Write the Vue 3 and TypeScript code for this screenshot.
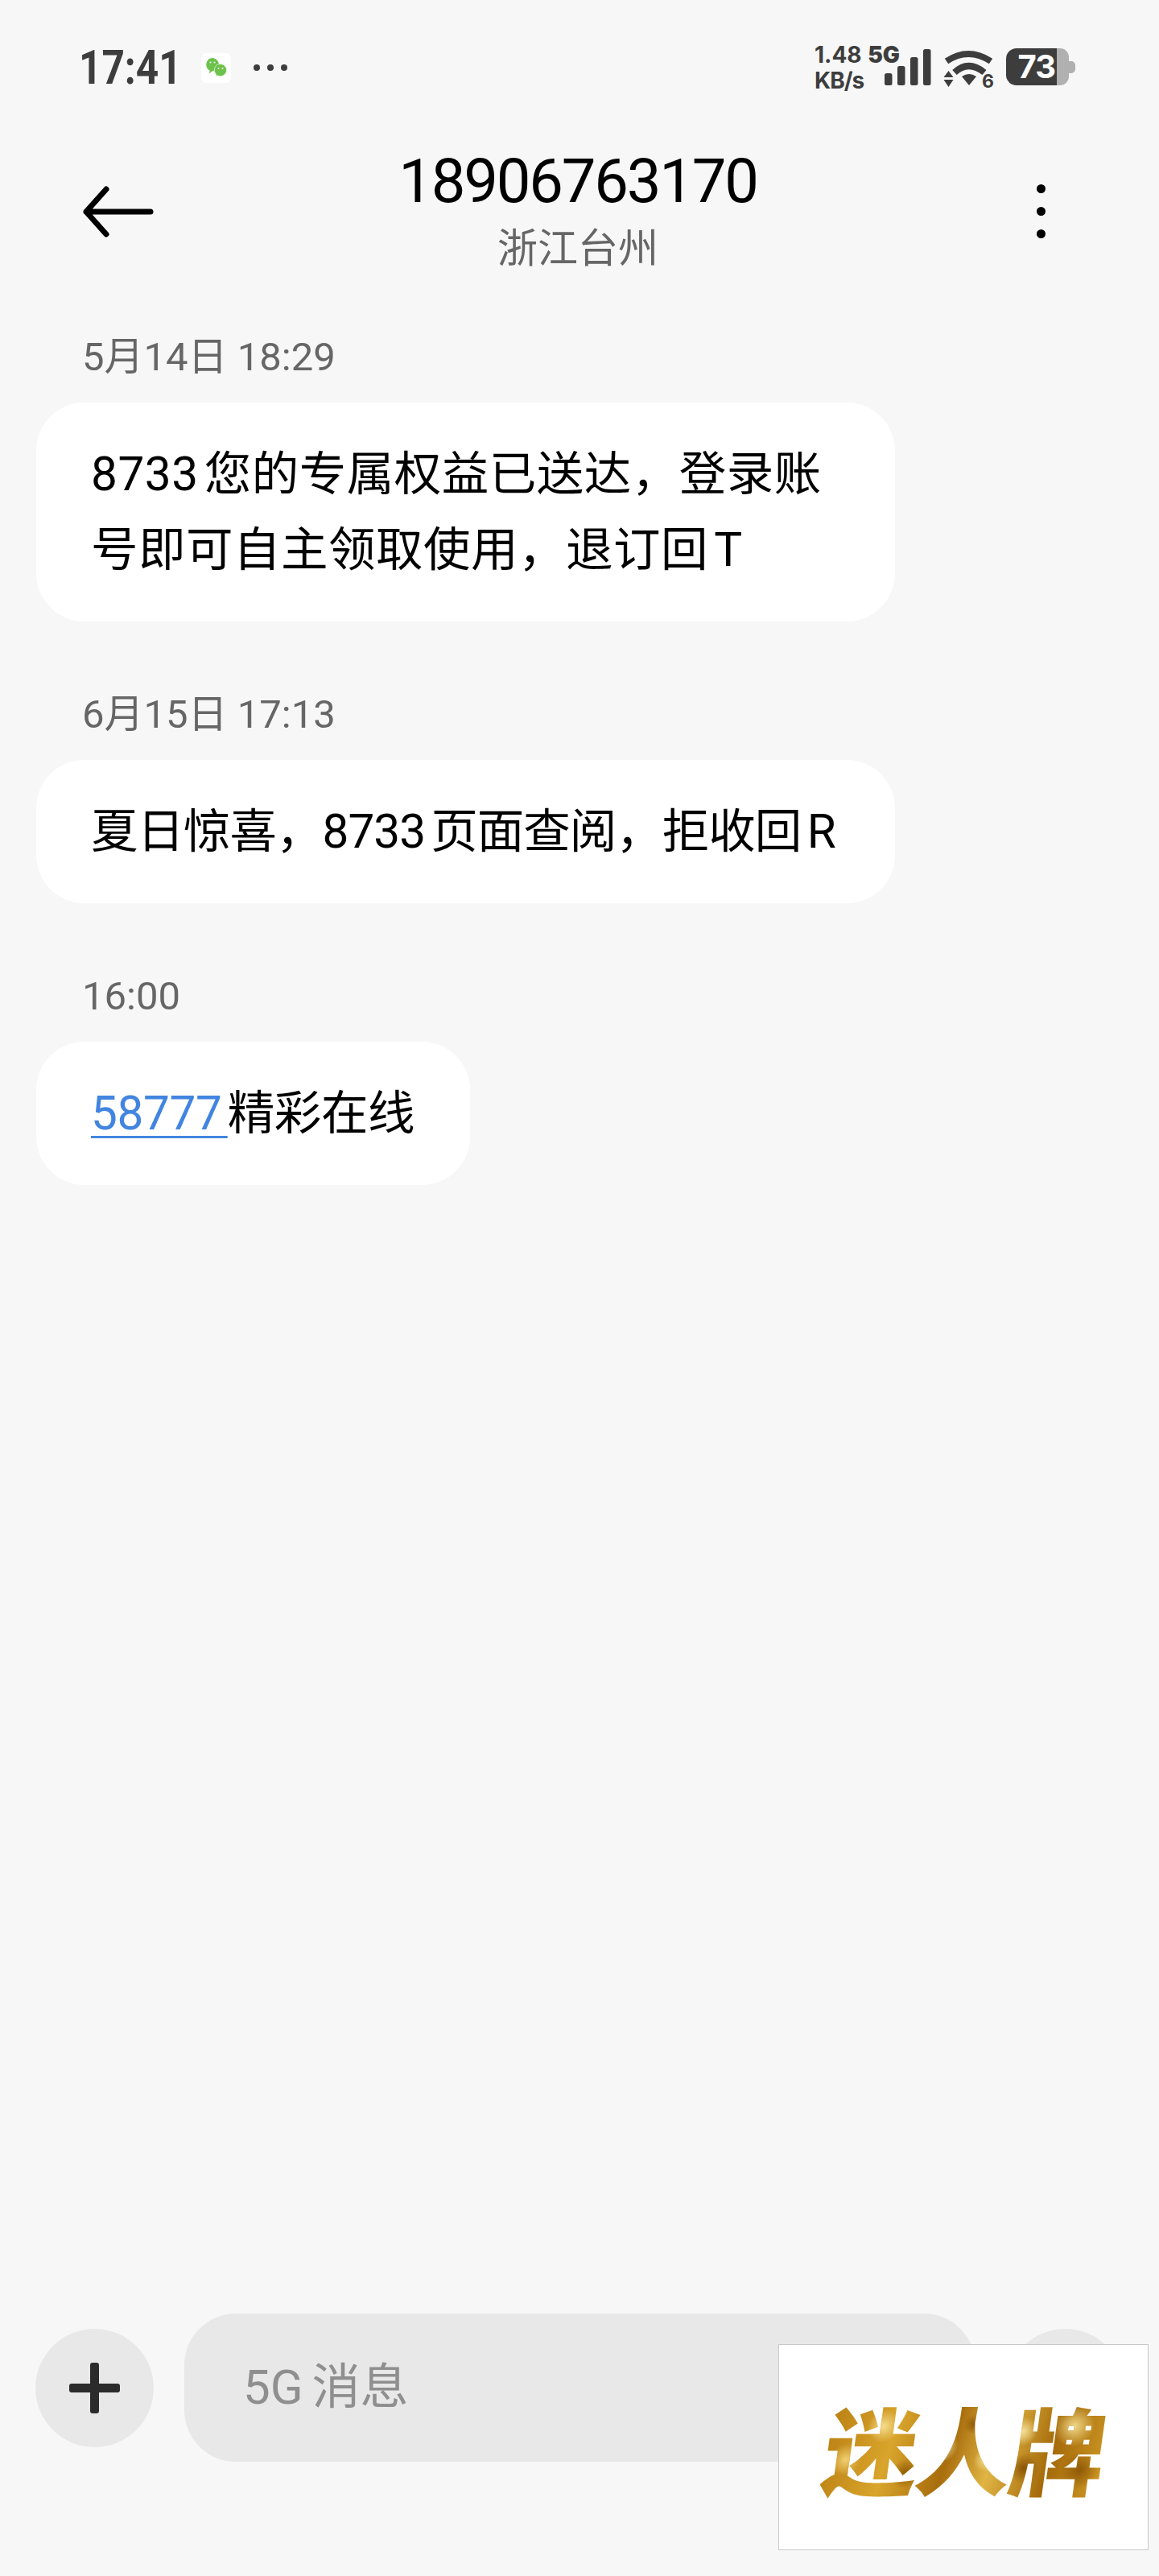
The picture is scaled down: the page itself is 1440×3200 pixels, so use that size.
<script setup lang="ts">
interface Message {
  time: string
  text: string
  link?: string
  wide?: boolean
  spacing: number
}

const messages: Message[] = [
  { time: '5月14日 18:29', text: '8733您的专属权益已送达，登录账号即可自主领取使用，退订回T', wide: true, spacing: 0.5 },
  { time: '6月15日 17:13', text: '夏日惊喜，8733页面查阅，拒收回R', wide: true, spacing: -1 },
  { time: '16:00', link: '58777', text: '精彩在线', spacing: -0.4 },
]

// signal bars, shortest first
const bars = [
  { x: 0, y: 30, h: 15 },
  { x: 16, y: 21, h: 24 },
  { x: 32, y: 10, h: 35 },
  { x: 48, y: 0, h: 45 },
]
</script>

<template>
  <div class="page">
    <div class="status-bar">
      <div class="status-left">
        <span class="clock">17:41</span>
        <span class="wechat-tile">
          <svg width="28" height="26" viewBox="0 0 28 26">
            <path d="M9 1a8.2 8.2 0 0 1 8 8.200a8.200 8.200 0 0 1-8 8l-4 3 .6-3.800A8.200 8.200 0 0 1 9 1z" fill="#6cc24a" />
            <path d="M19 8.500a7.600 7.600 0 1 1-3.800 14.200l-.2 2.300-1.800-3.800A7.600 7.600 0 0 1 19 8.500z" fill="#6cc24a" stroke="#fff" stroke-width=".6" />
            <circle cx="6.500" cy="6.500" r="1.100" fill="#fff" />
            <circle cx="11.500" cy="6.500" r="1.100" fill="#fff" />
            <circle cx="16.500" cy="14" r="1" fill="#fff" />
            <circle cx="21.500" cy="14" r="1" fill="#fff" />
          </svg>
        </span>
        <span class="more-dots"><i></i><i></i><i></i></span>
      </div>
      <div class="status-right">
        <div class="speed">
          <span>1.48 <b>5G</b></span>
          <span class="unit">KB/s</span>
        </div>
        <svg class="signal" width="58" height="46" viewBox="0 0 58 46">
          <rect v-for="b in bars" :key="b.x" :x="b.x" :y="b.y" width="9.500" :height="b.h" rx="2.500" fill="#3d3d3d" />
        </svg>
        <svg class="wifi" width="64" height="56" viewBox="0 0 64 56">
          <path d="M4 14Q31 -4 59 14" fill="none" stroke="#3d3d3d" stroke-width="8" />
          <path d="M14 28Q31 12 51 28" fill="none" stroke="#3d3d3d" stroke-width="8" />
          <path d="M23 33Q32 27 41 33L32 44z" fill="#3d3d3d" />
          <path d="M6.500 26l6 8H.5zM6.500 46l-6-9h12z" fill="#3d3d3d" />
          <text x="48" y="47" class="wifi-six">6</text>
        </svg>
        <div class="battery">
          <span class="battery-fill">73</span>
          <span class="battery-rest"></span>
          <span class="battery-nub"></span>
        </div>
      </div>
    </div>

    <header class="header">
      <svg class="back" width="90" height="64" viewBox="0 0 90 64">
        <path d="M31 4L6 32l25 28M6 32h80" fill="none" stroke="#000" stroke-width="7" stroke-linecap="round" stroke-linejoin="round" />
      </svg>
      <div class="contact">
        <div class="number">18906763170</div>
        <div class="region">浙江台州</div>
      </div>
      <div class="menu"><i></i><i></i><i></i></div>
    </header>

    <main class="thread">
      <section v-for="m in messages" :key="m.time" class="msg">
        <div class="time">{{ m.time }}</div>
        <div class="bubble" :class="{ wide: m.wide }" :style="{ letterSpacing: m.spacing + 'px' }">
          <span v-if="m.link" class="link">{{ m.link }}</span>{{ m.text }}
        </div>
      </section>
    </main>

    <footer class="composer">
      <div class="round-btn">
        <span class="plus"></span>
      </div>
      <div class="input">5G 消息</div>
      <div class="round-btn"></div>
    </footer>

    <div class="watermark">
      <span class="brand">迷人牌</span>
    </div>
  </div>
</template>

<style scoped>
.page {
  position: relative;
  width: 1440px;
  height: 3200px;
  display: flex;
  flex-direction: column;
  overflow: hidden;
  background: #f7f7f7;
  font-family: Roboto, "Noto Sans CJK SC", sans-serif;
}

.status-bar {
  height: 160px;
  flex: none;
  display: flex;
  justify-content: space-between;
  align-items: flex-start;
  padding: 0 104px 0 98px;
  box-sizing: border-box;
  color: #3d3d3d;
}
.status-left {
  display: flex;
  align-items: center;
  margin-top: 54px;
  height: 60px;
}
.clock {
  width: 152px;
  font-size: 59px;
  line-height: 60px;
  font-weight: 700;
  transform: scaleX(0.84);
  transform-origin: left center;
}
.wechat-tile {
  width: 37px;
  height: 37px;
  border-radius: 7px;
  background: #fff;
  display: flex;
  align-items: center;
  justify-content: center;
}
.more-dots {
  display: flex;
  gap: 9px;
  margin-left: 28px;
}
.more-dots i {
  width: 8px;
  height: 8px;
  border-radius: 50%;
  background: #3d3d3d;
}
.status-right {
  display: flex;
  align-items: flex-start;
  margin-top: 52px;
}
.speed {
  width: 87px;
  display: flex;
  flex-direction: column;
  font-family: Inter, sans-serif;
  font-size: 28px;
  line-height: 32px;
  font-weight: 700;
  white-space: nowrap;
}
.speed b {
  margin-left: 1px;
}
.unit {
  letter-spacing: -1px;
}
.signal {
  margin-top: 9px;
  margin-right: 15px;
}
.wifi {
  margin-top: 10px;
  margin-right: 14px;
}
.wifi-six {
  font-family: Inter, sans-serif;
  font-size: 23px;
  font-weight: 700;
  fill: #3d3d3d;
}
.battery {
  position: relative;
  display: flex;
  width: 86px;
  height: 46px;
  margin-top: 8px;
}
.battery-fill {
  width: 63px;
  height: 46px;
  box-sizing: border-box;
  padding-right: 2px;
  border-radius: 13px 0 0 13px;
  background: #3d3d3d;
  color: #fff;
  font-family: Inter, sans-serif;
  font-size: 40px;
  line-height: 46px;
  font-weight: 700;
  letter-spacing: -1px;
  text-align: right;
}
.battery-rest {
  width: 15px;
  height: 46px;
  border-radius: 0 11px 11px 0;
  background: #b0b0b0;
}
.battery-nub {
  width: 8px;
  height: 15px;
  margin-top: 16px;
  border-radius: 0 5px 5px 0;
  background: #b0b0b0;
}

.header {
  height: 187px;
  flex: none;
  display: grid;
  grid-template-columns: 1fr auto 1fr;
  align-items: start;
  padding: 0 141px 0 101px;
}
.back {
  margin-top: 71px;
}
.contact {
  text-align: center;
  margin: 20px 0 0 36px;
}
.number {
  font-size: 76px;
  line-height: 90px;
  color: #000;
  letter-spacing: -2.200px;
}
.region {
  font-size: 50px;
  line-height: 79px;
  color: #666;
}
.menu {
  justify-self: end;
  display: flex;
  flex-direction: column;
  gap: 17px;
  margin-top: 69px;
}
.menu i {
  width: 11px;
  height: 11px;
  border-radius: 50%;
  background: #000;
}

.thread {
  display: flex;
  flex-direction: column;
  align-items: flex-start;
  gap: 85px;
  padding: 66px 0 0 45px;
}
.msg {
  display: flex;
  flex-direction: column;
  align-items: flex-start;
}
.time {
  margin: 1px 0 26px 57px;
  font-size: 49px;
  line-height: 60px;
  color: #666;
}
.bubble {
  box-sizing: border-box;
  padding: 42px 69px 42px 68px;
  border-radius: 60px;
  background: #fff;
  color: #000;
  font-size: 58.500px;
  line-height: 94px;
  text-autospace: normal;
}
.bubble.wide {
  width: 1067px;
  padding-right: 50px;
}
.link {
  color: #4285e0;
  text-decoration: underline;
  text-decoration-thickness: 3px;
  text-underline-offset: 8px;
}

.composer {
  margin-top: auto;
  padding: 0 43px 142px 44px;
  display: flex;
  align-items: center;
  gap: 38px;
}
.round-btn {
  flex: none;
  width: 147px;
  height: 147px;
  border-radius: 50%;
  background: #e8e8e8;
  display: flex;
  align-items: center;
  justify-content: center;
}
.plus {
  position: relative;
  width: 63px;
  height: 63px;
}
.plus::before,
.plus::after {
  content: "";
  position: absolute;
  background: #2b2b2b;
  border-radius: 3px;
}
.plus::before {
  left: 0;
  right: 0;
  top: 26px;
  height: 11px;
}
.plus::after {
  top: 0;
  bottom: 0;
  left: 26px;
  width: 11px;
}
.input {
  flex: 1;
  height: 184px;
  box-sizing: border-box;
  padding-left: 73px;
  border-radius: 64px;
  background: #e8e8e8;
  color: #8f8f8f;
  font-size: 60px;
  line-height: 184px;
  word-spacing: -4px;
}

.watermark {
  position: absolute;
  left: 967px;
  top: 2912px;
  width: 460px;
  height: 256px;
  box-sizing: border-box;
  border: 1px solid #c8c8c8;
  background: #fff;
  display: flex;
  align-items: center;
  justify-content: center;
}
.brand {
  display: block;
  margin-left: 4px;
  font-family: "Noto Sans CJK SC", sans-serif;
  font-size: 118px;
  line-height: 130px;
  font-weight: 900;
  letter-spacing: -2px;
  transform: skewX(-8deg);
  color: transparent;
  background-image:
    radial-gradient(circle at 8% 62%, #f0cf72 0, transparent 6%),
    radial-gradient(circle at 20% 30%, #f4dc8e 0, transparent 7%),
    radial-gradient(circle at 30% 75%, #8f5a08 0, transparent 7%),
    radial-gradient(circle at 42% 50%, #f6e2a0 0, transparent 9%),
    radial-gradient(circle at 52% 28%, #8f5a08 0, transparent 6%),
    radial-gradient(circle at 58% 62%, #f3dc90 0, transparent 7%),
    radial-gradient(circle at 72% 70%, #8a5606 0, transparent 7%),
    radial-gradient(circle at 70% 35%, #f4e09a 0, transparent 7%),
    radial-gradient(circle at 88% 30%, #f1d988 0, transparent 8%),
    radial-gradient(circle at 92% 72%, #8f5a08 0, transparent 7%),
    linear-gradient(100deg, #b97e12, #d9a52c 25%, #a86d0c 45%, #e0b544 60%, #a56a0a 80%, #cf9a26);
  -webkit-background-clip: text;
  background-clip: text;
}
</style>

<style>
html,
body {
  margin: 0;
  background: #f7f7f7;
}
</style>
